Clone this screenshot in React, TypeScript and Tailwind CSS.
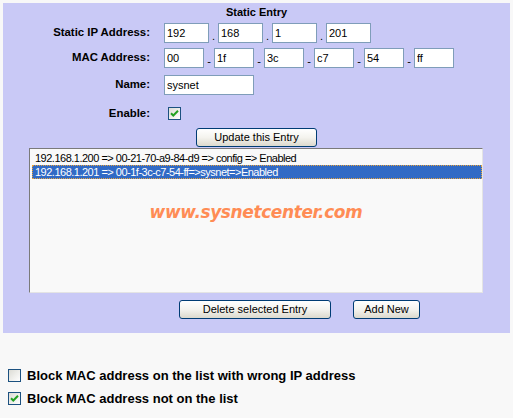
import React from "react";

function XpCheck({ checked }: { checked: boolean }) {
  return (
    <span className="inline-flex w-[13px] h-[13px] shrink-0 items-center justify-center border border-[#1c5180] bg-linear-to-br from-[#dcdcd5] to-white">
      {checked && (
        <svg width="9" height="9" viewBox="0 0 9 9">
          <path d="M1 4.2l2.3 2.3L8 1.8" fill="none" stroke="#21a121" strokeWidth="2" />
        </svg>
      )}
    </span>
  );
}

function XpButton({ label, w }: { label: string; w: string }) {
  return (
    <button
      type="button"
      className={`${w} h-[19px] shrink-0 rounded-[3px] border border-[#003c74] bg-linear-to-b from-white via-[#f4f3ee] to-[#dcd9cd] text-[11px] leading-[17px] text-black`}
    >
      {label}
    </button>
  );
}

function Field({ value, w }: { value: string; w: string }) {
  return (
    <input
      readOnly
      value={value}
      className={`${w} h-[20px] shrink-0 border border-[#7f9db9] bg-white px-[2px] text-[11px] text-black outline-none`}
    />
  );
}

function Sep({ ch, w }: { ch: string; w: string }) {
  return (
    <span className={`${w} shrink-0 self-end pb-[1px] text-center text-[11px] leading-[12px] text-black`}>
      {ch}
    </span>
  );
}

const ip = ["192", "168", "1", "201"];
const mac = ["00", "1f", "3c", "c7", "54", "ff"];

const entries = [
  "192.168.1.200 => 00-21-70-a9-84-d9 => config => Enabled",
  "192.168.1.201 => 00-1f-3c-c7-54-ff=>sysnet=>Enabled",
];

export default function App() {
  return (
    <div className="w-[513px] h-[418px] bg-[#f8f8f8] font-['Liberation_Sans',Arial,sans-serif] text-black">
      <div className="flex pt-[3px] pl-[3px]">
        <div className="flex h-[330px] w-[507px] flex-col bg-[#c9c9f6]">
          <div className="mt-[2px] h-[14px] text-center text-[11px] font-bold leading-[14px]">
            Static Entry
          </div>

          {/* IP row */}
          <div className="mt-[4px] flex h-[20px] items-center">
            <div className="w-[147px] text-right text-[11.4px] font-bold">Static IP Address:</div>
            <div className="ml-[14px] flex h-[20px]">
              {ip.map((v, i) => (
                <React.Fragment key={i}>
                  {i > 0 && <Sep ch="." w="w-[9px]" />}
                  <Field value={v} w="w-[45px]" />
                </React.Fragment>
              ))}
            </div>
          </div>

          {/* MAC row */}
          <div className="mt-[5px] flex h-[20px] items-center">
            <div className="w-[147px] text-right text-[11.4px] font-bold">MAC Address:</div>
            <div className="ml-[14px] flex h-[20px]">
              {mac.map((v, i) => (
                <React.Fragment key={i}>
                  {i > 0 && <Sep ch="-" w="w-[10px]" />}
                  <Field value={v} w="w-[40px]" />
                </React.Fragment>
              ))}
            </div>
          </div>

          {/* Name row */}
          <div className="mt-[7px] flex h-[20px] items-center">
            <div className="w-[147px] text-right text-[11.4px] font-bold">Name:</div>
            <div className="ml-[14px] flex">
              <Field value="sysnet" w="w-[90px]" />
            </div>
          </div>

          {/* Enable row */}
          <div className="mt-[12px] flex h-[13px] items-center">
            <div className="w-[147px] text-right text-[11.4px] font-bold">Enable:</div>
            <div className="ml-[18px] flex">
              <XpCheck checked />
            </div>
          </div>

          <div className="mt-[8px] flex justify-center">
            <XpButton label="Update this Entry" w="w-[121px]" />
          </div>

          {/* list box */}
          <div className="relative mt-[1px] ml-[26px] h-[145px] w-[454px] border border-t-[#7a7a7a] border-l-[#7a7a7a] border-r-[#e4e4e4] border-b-[#e4e4e4] bg-[#f9f9f9] pt-[2px] pl-[2px]">
            {entries.map((e, i) => (
              <div
                key={i}
                className={
                  i === 1
                    ? "h-[14px] border border-dotted border-[#e8a33a] bg-[#316ac5] pl-[2px] text-[11px] leading-[12px] tracking-[-0.5px] whitespace-nowrap text-white"
                    : "h-[14px] border border-transparent pl-[2px] text-[11px] leading-[12px] tracking-[-0.5px] whitespace-nowrap text-black"
                }
              >
                {e}
              </div>
            ))}
            <div className="absolute top-[53px] right-0 left-0 text-center font-['DejaVu_Sans',sans-serif] text-[17px] leading-[20px] font-bold tracking-[-0.4px] text-[#ff8c55] italic">
              www.sysnetcenter.com
            </div>
          </div>

          <div className="mt-[7px] ml-[176px] flex gap-[22px]">
            <XpButton label="Delete selected Entry" w="w-[152px]" />
            <XpButton label="Add New" w="w-[67px]" />
          </div>
        </div>
      </div>

      <div className="mt-[36px] flex flex-col gap-[10px] pl-[8px]">
        <div className="flex h-[13px] items-center gap-[6px]">
          <XpCheck checked={false} />
          <span className="text-[13px] font-bold whitespace-nowrap">
            Block MAC address on the list with wrong IP address
          </span>
        </div>
        <div className="flex h-[13px] items-center gap-[6px]">
          <XpCheck checked />
          <span className="text-[13px] font-bold whitespace-nowrap">Block MAC address not on the list</span>
        </div>
      </div>
    </div>
  );
}
